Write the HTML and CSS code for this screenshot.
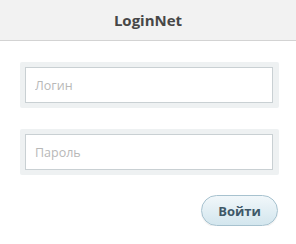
FILE: index.html
```html
<!DOCTYPE html>
<html lang="ru">
<head>
    <meta charset="UTF-8">
    <title>LoginNet</title>
    <link rel="stylesheet" href="styles.css">
</head>
<body>
    <!-- шапка -->
    <div class="header">LoginNet</div>

    <form class="login-form">
        <div class="field">
            <input type="text" placeholder="Логин">
        </div>
        <div class="field">
            <input type="password" placeholder="Пароль">
        </div>
        <div class="actions">
            <button type="button">Войти</button>
        </div>
    </form>
</body>
</html>
```
FILE: styles.css
```css
body {
    margin: 0;
    background: #ffffff;
    font-family: 'Open Sans', 'Liberation Sans', Arial, sans-serif;
}

.header {
    height: 40px;
    line-height: 40px;
    background-color: #f2f2f2;
    border-bottom: 1px solid #d3d3d3;
    text-align: center;
    font-size: 15px;
    font-weight: bold;
    color: #474747;
}

.login-form {
    padding: 21px 17px 0 20px;
}

.field {
    padding: 5px 6px 5px 5px;
    background-color: #eef1f2;
    border-radius: 2px;
    margin-bottom: 21px;
}

.field input {
    display: block;
    box-sizing: border-box;
    width: 100%;
    height: 36px;
    margin: 0;
    padding: 0 9px;
    border: 1px solid #c9d0d3;
    background: #ffffff;
    font-family: inherit;
    font-size: 12.5px;
    color: #555555;
    outline: none;
}

.field input::placeholder {
    color: #b8b8b8;
}

.actions {
    display: flex;
    justify-content: flex-end;
    margin-top: -1px;
}

button {
    width: 77px;
    height: 31px;
    margin-right: 1px;
    padding: 0;
    border: 1px solid #a7c2cf;
    border-radius: 16px;
    background: linear-gradient(#f1f7fa, #d3e6ee);
    box-shadow: 0 1px 1px rgba(0, 0, 0, 0.08);
    font-family: inherit;
    font-size: 13px;
    font-weight: bold;
    color: #3e5868;
    cursor: pointer;
}
```
